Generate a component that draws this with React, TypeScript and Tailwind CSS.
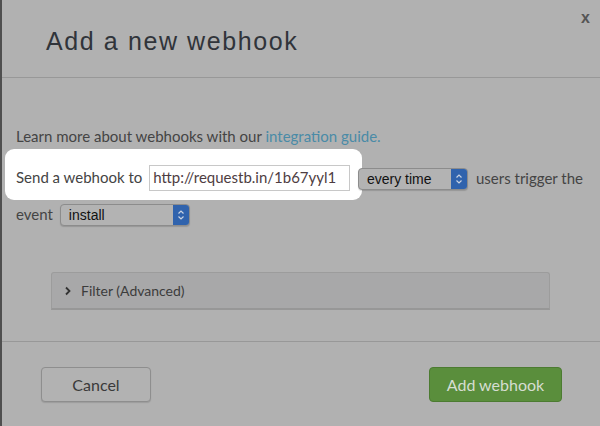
import React from 'react'

// Stepper arrows used by the native-looking select boxes
function SelectBox({ value, width }: { value: string; width: string }) {
  return (
    <div
      className={`${width} h-[22px] flex items-stretch rounded-[4px] border border-[#8c8c8c] bg-[#b3b3b3] shadow-[0_1px_1px_rgba(0,0,0,0.15)]`}
    >
      <span className="flex-1 pl-[8px] text-[14px] leading-[20px] text-[#111] font-['Liberation_Sans',sans-serif]">
        {value}
      </span>
      <span className="w-[16px] rounded-r-[3px] bg-[#3063ad] flex items-center justify-center">
        <svg width="8" height="12" viewBox="0 0 8 12" fill="none">
          <path d="M1.5 4.5 L4 2 L6.5 4.5" stroke="#c9d3e2" strokeWidth="1.2" />
          <path d="M1.5 7.5 L4 10 L6.5 7.5" stroke="#c9d3e2" strokeWidth="1.2" />
        </svg>
      </span>
    </div>
  )
}

export default function App() {
  return (
    <div className="w-[600px] h-[426px] bg-[#b1b1b1] border-l-2 border-[#4f4f4f] relative overflow-hidden flex flex-col font-['Lato',sans-serif] text-[#444]">
      {/* 關閉按鈕 */}
      <span className="absolute right-[10px] top-[6px] text-[16px] font-bold text-[#555] font-['Liberation_Sans',sans-serif]">
        x
      </span>

      {/* 標題 */}
      <div className="h-[78px] border-b border-[#989898] pl-[44px] pt-[27px] shrink-0">
        <h1 className="text-[25px] leading-[28px] tracking-[1.6px] text-[#30343a] font-['Liberation_Sans',sans-serif]">
          Add a new webhook
        </h1>
      </div>

      {/* 內容 */}
      <div className="h-[264px] border-b border-[#989898] shrink-0 flex flex-col">
        <p className="pl-[14px] pt-[49px] text-[15px] leading-[18px]">
          Learn more about webhooks with our{' '}
          <span className="text-[#4a8ba7]">integration guide.</span>
        </p>

        <div className="mt-[4px] flex items-center">
          <div className="ml-[3px] h-[51px] w-[357px] bg-white rounded-[9px] flex items-center pl-[11px] pt-[6px]">
            <span className="text-[15px] text-[#444]">Send a webhook to</span>
            <div className="ml-[7px] w-[201px] h-[26px] border border-[#c8c8c8] flex items-center pl-[3px] text-[15px] text-[#4e3d42]">
              http://requestb.in/1b67yyl1
            </div>
          </div>
          <div className="ml-[-4px] mt-[9px]">
            <SelectBox value="every time" width="w-[110px]" />
          </div>
          <span className="ml-[8px] mt-[8px] text-[15px]">users trigger the</span>
        </div>

        <div className="mt-[4px] pl-[14px] flex items-center">
          <span className="text-[15px] mt-[-2px]">event</span>
          <div className="ml-[7px]">
            <SelectBox value="install" width="w-[130px]" />
          </div>
        </div>

        {/* 篩選面板 */}
        <div className="mt-[46px] ml-[49px] w-[499px] h-[38px] bg-[#a8a8a9] border border-[#9c9c9c] border-b-2 border-b-[#979797] rounded-t-[3px] flex items-center pl-[12px]">
          <svg width="8" height="10" viewBox="0 0 8 10" className="mr-[9px]">
            <path d="M2 1.5 L5.5 5 L2 8.5" stroke="#333" strokeWidth="1.8" fill="none" />
          </svg>
          <span className="text-[14px] text-[#3c3c3c]">Filter (Advanced)</span>
        </div>
      </div>

      {/* 按鈕列 */}
      <div className="flex items-start justify-between pt-[25px] pl-[39px] pr-[38px]">
        <button className="w-[110px] h-[35px] rounded-[4px] border border-[#8e8e8e] bg-[#b2b2b2] shadow-[0_1px_1px_rgba(0,0,0,0.12)] text-[16px] text-[#3a3a3a]">
          Cancel
        </button>
        <button className="w-[133px] h-[35px] rounded-[4px] border border-[#4c7b31] bg-[#5a8e3c] text-[16px] text-[#d6ddd2]">
          Add webhook
        </button>
      </div>
    </div>
  )
}
